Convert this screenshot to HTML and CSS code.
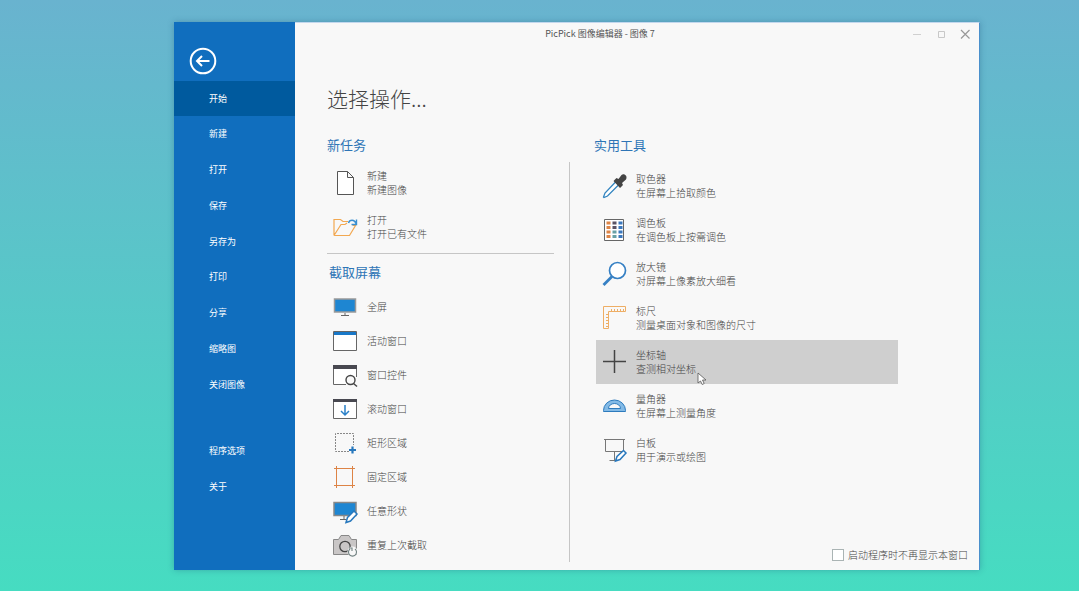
FILE: index.html
```
<!DOCTYPE html>
<html lang="zh-CN">

<head>
    <meta charset="UTF-8">
    <meta name="viewport" content="width=device-width, initial-scale=1.0">
    <title>PicPick 图像编辑器</title>
    <link rel="stylesheet" href="styles.css">
</head>

<body>
    <div class="window">
        <nav class="sidebar">
            <button class="back" aria-label="返回">
                <svg width="28" height="28" viewBox="0 0 28 28" fill="none" stroke="#fff" stroke-width="2">
                    <circle cx="14" cy="14" r="12.3" />
                    <path d="M20.5 14H8.500M13 9l-5 5 5 5" />
                </svg>
            </button>
            <div class="menu menu-main">
                <button class="menu-item active">开始</button>
                <button class="menu-item">新建</button>
                <button class="menu-item">打开</button>
                <button class="menu-item">保存</button>
                <button class="menu-item">另存为</button>
                <button class="menu-item">打印</button>
                <button class="menu-item">分享</button>
                <button class="menu-item">缩略图</button>
                <button class="menu-item">关闭图像</button>
            </div>
            <div class="menu">
                <button class="menu-item">程序选项</button>
                <button class="menu-item">关于</button>
            </div>
        </nav>

        <main class="main">
            <header class="titlebar">
                <span class="caption">PicPick 图像编辑器 - 图像 7</span>
                <button class="win-btn" aria-label="最小化">
                    <svg width="10" height="10" viewBox="0 0 10 10"><path d="M1 5.500h8" stroke="#d0d0d0" /></svg>
                </button>
                <button class="win-btn" aria-label="最大化">
                    <svg width="10" height="10" viewBox="0 0 10 10"><path d="M2.500 2.500h6v6h-6z" fill="none" stroke="#c8c8c8" /></svg>
                </button>
                <button class="win-btn" aria-label="关闭">
                    <svg width="10" height="10" viewBox="0 0 10 10"><path d="M1 1l8.500 8.500M9.500 1L1 9.500" stroke="#999" stroke-width="1.200" /></svg>
                </button>
            </header>

            <h1>选择操作...</h1>

            <div class="columns">
                <section class="tasks">
                    <h2>新任务</h2>
                    <div class="list">
                        <button class="item">
                            <svg class="icon" viewBox="0 0 24 24" fill="#fff" stroke="#555">
                                <path d="M4.500.5h10l6 6v17h-16zM14.500.5v6h6" />
                            </svg>
                            <span>新建<br>新建图像</span>
                        </button>
                        <button class="item">
                            <svg class="icon" viewBox="0 0 24 24" fill="none">
                                <path d="M1 20.500v-16h6.500l2.500 2h5M1 20.500l7-11h4l2-1.500M1 20.500h15.500l6-10h-3" stroke="#f2a851" stroke-width="1.200" />
                                <path d="M15.500 8c1-3.500 6-4 7.500.5M23.500 4.500v5h-5" stroke="#3a8fd0" stroke-width="1.400" />
                            </svg>
                            <span>打开<br>打开已有文件</span>
                        </button>
                    </div>
                    <hr>
                    <h2 class="capture-title">截取屏幕</h2>
                    <div class="list capture">
                        <button class="item">
                            <svg class="icon" viewBox="0 0 24 24">
                                <path d="M1.500 4h21v13h-21z" fill="#1e86d2" stroke="#999" stroke-width="1.500" />
                                <path d="M12 18v2.500M8 20.500h8" stroke="#666" />
                            </svg>
                            <span>全屏</span>
                        </button>
                        <button class="item">
                            <svg class="icon" viewBox="0 0 24 24">
                                <path d="M.5 2.500h23v19H.5z" fill="#fff" stroke="#666" />
                                <path d="M1 3h22v3H1z" fill="#1978c8" />
                            </svg>
                            <span>活动窗口</span>
                        </button>
                        <button class="item">
                            <svg class="icon" viewBox="0 0 24 24">
                                <path d="M13 21.500H.5v-19h23V14" fill="#fff" stroke="#666" />
                                <path d="M0 2h24v4H0z" fill="#484850" />
                                <circle cx="17.500" cy="17" r="4.500" fill="#f8f8f8" stroke="#444" stroke-width="1.400" />
                                <path d="M20.500 20.500l3.500 3" stroke="#444" stroke-width="1.500" />
                            </svg>
                            <span>窗口控件</span>
                        </button>
                        <button class="item">
                            <svg class="icon" viewBox="0 0 24 24">
                                <path d="M.5 2.500h23v19H.5z" fill="#fff" stroke="#666" />
                                <path d="M0 2h24v3H0z" fill="#484850" />
                                <path d="M12 8v10M8 14l4 4 4-4" fill="none" stroke="#2a80c8" stroke-width="1.500" />
                            </svg>
                            <span>滚动窗口</span>
                        </button>
                        <button class="item">
                            <svg class="icon" viewBox="0 0 24 24" fill="none">
                                <path d="M16 20.500H2.500v-18h18V14" stroke="#888" stroke-dasharray="2 1" />
                                <path d="M19.500 15.500v7M16 19h7" stroke="#2878bd" stroke-width="2.200" />
                            </svg>
                            <span>矩形区域</span>
                        </button>
                        <button class="item">
                            <svg class="icon" viewBox="0 0 24 24">
                                <path d="M1 3.500h21M1 20.500h21M3.500 1v22M19.500 1v22" stroke="#dd8345" />
                            </svg>
                            <span>固定区域</span>
                        </button>
                        <button class="item">
                            <svg class="icon" viewBox="0 0 24 24">
                                <path d="M1 3.500h22v13H1z" fill="#1e86d2" stroke="#888" stroke-width="1.500" />
                                <path d="M11 17v3M7 20.500h6" stroke="#666" />
                                <path d="M13 23.500l1.500-5 6.500-6.500 3 3-6.500 7z" fill="#fff" stroke="#2878bd" stroke-width="1.500" />
                            </svg>
                            <span>任意形状</span>
                        </button>
                        <button class="item">
                            <svg class="icon" viewBox="0 0 24 24">
                                <path d="M.5 6.500h5l2.500-4h8l2.500 4h5v15H.5z" fill="#c9c6c6" stroke="#888" />
                                <circle cx="12" cy="13.500" r="5.200" fill="none" stroke="#444" stroke-width="1.300" />
                                <circle cx="19.500" cy="18.500" r="5" fill="#f8f8f8" />
                                <path d="M17 16a4 4 0 1 0 5 0M16 15h3v3" fill="none" stroke="#708080" stroke-width="1.100" />
                            </svg>
                            <span>重复上次截取</span>
                        </button>
                    </div>
                </section>

                <div class="divider"></div>

                <section class="tools">
                    <h2>实用工具</h2>
                    <div class="list tool-list">
                        <button class="item">
                            <svg class="icon" viewBox="0 0 24 24">
                                <path d="M13 7.500l3 3L4.500 22 1 23.500.5 23 2 19z" fill="#fff" stroke="#3385c0" stroke-width="1.300" />
                                <path d="M10.500 7l3-3 2 1 3-4c2.500-2 6.500 1 4.500 4.500l-4 3.500 1 2-3 3z" fill="#444" />
                            </svg>
                            <span>取色器<br>在屏幕上拾取颜色</span>
                        </button>
                        <button class="item">
                            <svg class="icon" viewBox="0 0 24 24" fill="none">
                                <path d="M1.500 1.500h19v21h-19z" fill="#fff" stroke="#666" />
                                <path d="M5.500 3.500v18" stroke="#dd8548" stroke-width="4" stroke-dasharray="3 1.500" />
                                <path d="M11.500 3.500v9" stroke="#5a5263" stroke-width="4" stroke-dasharray="3 1.500" />
                                <path d="M11.500 12.500v9" stroke="#68a0a5" stroke-width="4" stroke-dasharray="3 1.500" />
                                <path d="M17.500 3.500v18" stroke="#3b78bd" stroke-width="4" stroke-dasharray="3 1.500" />
                            </svg>
                            <span>调色板<br>在调色板上按需调色</span>
                        </button>
                        <button class="item">
                            <svg class="icon" viewBox="0 0 24 24">
                                <path d="M.5 23l8.500-8.500" stroke="#3680c4" stroke-width="2.800" />
                                <circle cx="14.500" cy="8.500" r="8" fill="#fff" stroke="#3680c4" stroke-width="1.700" />
                            </svg>
                            <span>放大镜<br>对屏幕上像素放大细看</span>
                        </button>
                        <button class="item">
                            <svg class="icon" viewBox="0 0 24 24" fill="none" stroke="#eeae65">
                                <path d="M.5.5h22v5h-17v17h-5z" />
                                <path d="M8.500 5V3M11.500 5V3M14.500 5V3M17.500 5V3M20.500 5V3M5 8.500H3M5 11.500H3M5 14.500H3M5 17.500H3M5 20.500H3" />
                            </svg>
                            <span>标尺<br>测量桌面对象和图像的尺寸</span>
                        </button>
                        <button class="item selected">
                            <svg class="icon" viewBox="0 0 24 24">
                                <path d="M11.500 0v23M0 11.500h23" stroke="#444" stroke-width="1.500" />
                            </svg>
                            <span>坐标轴<br>查测相对坐标</span>
                            <svg class="pointer" width="10" height="14" viewBox="0 0 10 14">
                                <path d="M1 1v10l2.500-2 1.700 3.500 2-1L5.500 8H9z" fill="#fff" stroke="#555" stroke-width=".8" />
                            </svg>
                        </button>
                        <button class="item">
                            <svg class="icon" viewBox="0 0 24 24" stroke="#2d7bbd">
                                <path d="M.5 17.500v-1a11 10.500 0 0 1 22 0v1z" fill="#83bae6" />
                                <path d="M5.500 14.500a6 5 0 0 1 12 0z" fill="#f8f8f8" />
                            </svg>
                            <span>量角器<br>在屏幕上测量角度</span>
                        </button>
                        <button class="item">
                            <svg class="icon" viewBox="0 0 24 24" fill="none" stroke="#777">
                                <path d="M1 1.500h21M2.500 1.500v12h18v-12M11.500 13.500v9M6.500 22.500h7" />
                                <path d="M12.500 23l1.500-4.500 6.500-6 2.500 2.500-6 6.500z" fill="#fff" stroke="#2878bd" stroke-width="1.500" />
                            </svg>
                            <span>白板<br>用于演示或绘图</span>
                        </button>
                    </div>
                    <label class="startup"><input type="checkbox">启动程序时不再显示本窗口</label>
                </section>
            </div>
        </main>
    </div>
</body>

</html>
```
FILE: styles.css
```
* {
    box-sizing: border-box;
}

body {
    margin: 0;
    min-height: 100vh;
    padding: 22px 99px 21px 174px;
    background: linear-gradient(#69b3cf, #46dcc1);
    font-family: "Noto Sans CJK SC", sans-serif;
    font-size: 10px;
    font-weight: 300;
    line-height: 14px;
    color: #444;
}

button {
    margin: 0;
    padding: 0;
    border: none;
    background: none;
    font: inherit;
    color: inherit;
    text-align: left;
}

.window {
    display: flex;
    background: #f8f8f8;
    box-shadow: 0 0 6px rgba(30, 80, 120, 0.35);
}

/* 左侧菜单 */
.sidebar {
    flex: 0 0 121px;
    background: #106ebe;
    color: #fff;
    font-size: 9px;
    font-weight: 400;
}

.back {
    display: block;
    margin: 25px 0 6px 15px;
    height: 28px;
}

.back svg {
    display: block;
}

.menu {
    display: flex;
    flex-direction: column;
    gap: 1px;
}

.menu-main {
    gap: 0;
    justify-content: space-between;
    min-height: 321px;
    margin-bottom: 31px;
}

.menu-item {
    height: 35px;
    padding-left: 35px;
}

.menu-item.active {
    background: #005a9e;
}

/* 右侧内容 */
.main {
    flex: 1;
    display: flex;
    flex-direction: column;
    padding-bottom: 8px;
    border-top: 1px solid #c3d8ee;
    border-right: 1px solid #4a90cc;
}

.titlebar {
    display: flex;
    align-items: center;
    height: 22px;
    padding-right: 2px;
    font-size: 9px;
    font-weight: 400;
    color: #555;
}

.caption {
    flex: 1;
    text-align: center;
}

.win-btn {
    display: flex;
    align-items: center;
    justify-content: center;
    width: 24px;
    height: 22px;
}

h1 {
    margin: 37px 32px 21px;
    font-size: 21px;
    font-weight: 300;
    line-height: 32px;
}

h2 {
    margin: 0;
    font-size: 13px;
    font-weight: 400;
    line-height: 20px;
    color: #2e75b6;
}

.columns {
    flex: 1;
    display: flex;
    padding: 0 11px 0 32px;
}

.tasks {
    flex: 0 0 227px;
}

.divider {
    width: 1px;
    margin: 27px 24px 0 15px;
    background: #c6c6c6;
}

.list {
    display: flex;
    flex-direction: column;
    margin-top: 6px;
}

.item {
    position: relative;
    display: flex;
    align-items: center;
    gap: 10px;
    height: 44px;
    padding-left: 6px;
}

.icon {
    flex: none;
    width: 24px;
    height: 24px;
    overflow: visible;
}

hr {
    margin: 4px 0 8px;
    border: none;
    border-top: 1px solid #c6c6c6;
}

.capture-title {
    padding-left: 2px;
}

.capture {
    margin-top: 8px;
}

.capture .item {
    height: 34px;
}

.tools {
    flex: 1;
    display: flex;
    flex-direction: column;
}

.tool-list {
    max-width: 304px;
    margin-top: 9px;
    padding-left: 2px;
}

.tool-list .item {
    gap: 9px;
    padding-left: 7px;
}

.item.selected {
    background: #cfcfcf;
}

/* 鼠标指针 */
.pointer {
    position: absolute;
    left: 101px;
    top: 32px;
}

.startup {
    display: flex;
    align-items: center;
    gap: 4px;
    margin-top: auto;
    align-self: flex-end;
}

.startup input {
    appearance: none;
    width: 12px;
    height: 12px;
    margin: 0;
    border: 1px solid #aab4b4;
    background: #fff;
}
```
